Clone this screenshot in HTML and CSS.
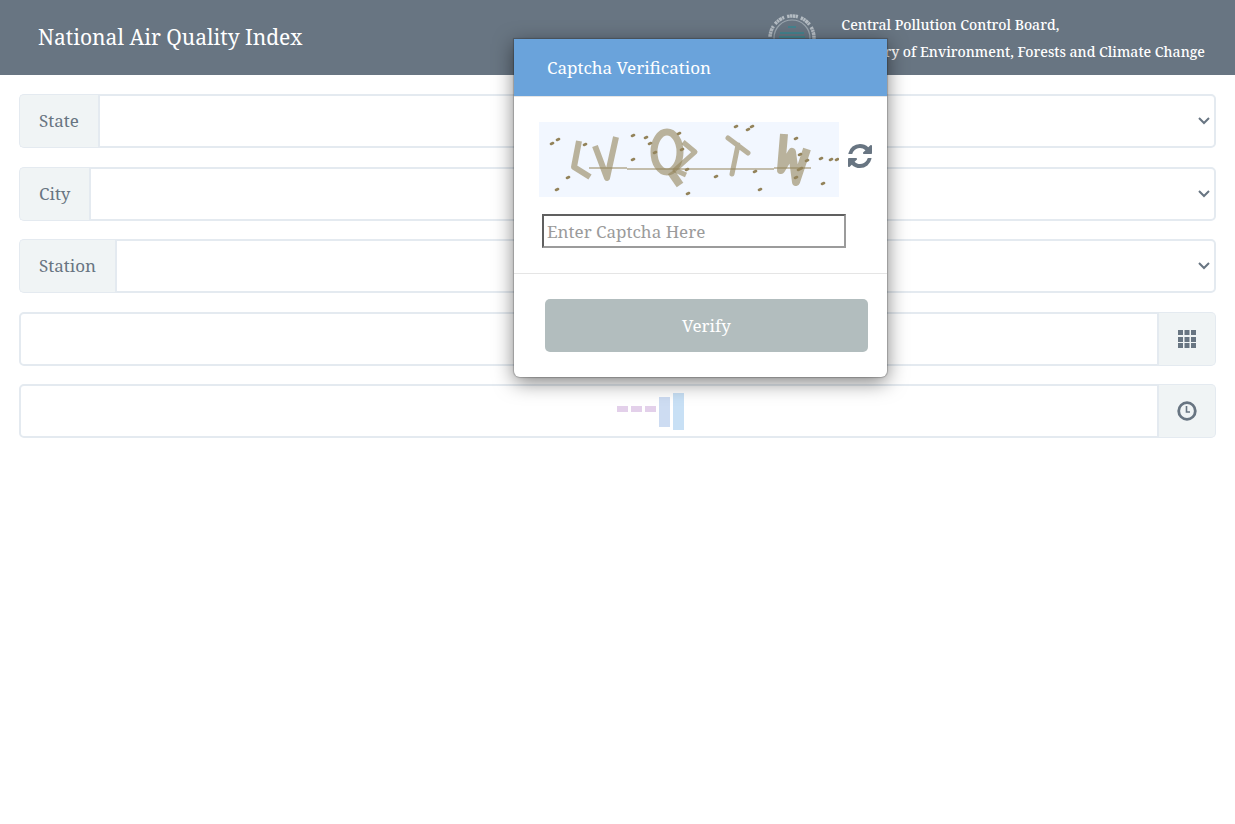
FILE: index.html
```html
<!DOCTYPE html>
<html lang="en">
<head>
<meta charset="utf-8">
<title>National Air Quality Index</title>
<link rel="stylesheet" href="styles.css">
</head>
<body>
<header class="topbar">
  <h1 class="title">National Air Quality Index</h1>
  <div class="board">
    <svg class="logo" viewBox="0 0 50 50" aria-hidden="true">
      <circle cx="25" cy="25" r="22" fill="none" stroke="#b4bcc3" stroke-width="3.500" stroke-dasharray="2.500 .5 2 .5 3 .5 2 3"/>
      <circle cx="25" cy="25" r="18" fill="none" stroke="#9aa5ae" stroke-width="1.200"/>
      <path d="M21 14h8M13 20h24M12 24h26M12 27h26M12 31h26M16 35h18" stroke="#44838e" stroke-width="2"/>
    </svg>
    <p class="board-name">Central Pollution Control Board,<br>Ministry of Environment, Forests and Climate Change</p>
  </div>
</header>

<main class="filters">
  <div class="group">
    <label class="addon" for="state">State</label>
    <select class="control" id="state"><option></option></select>
  </div>
  <div class="group">
    <label class="addon" for="city">City</label>
    <select class="control" id="city"><option></option></select>
  </div>
  <div class="group">
    <label class="addon" for="station">Station</label>
    <select class="control" id="station"><option></option></select>
  </div>
  <div class="group">
    <input class="control" type="text" aria-label="Date">
    <button class="addon addon-icon" type="button" aria-label="Choose date">
      <svg width="18" height="18" viewBox="0 0 18 18" fill="currentColor"><path d="M0 0h5v5H0zM6.500 0h5v5h-5zM13 0h5v5h-5zM0 7h5v5H0zM6.500 7h5v5h-5zM13 7h5v5h-5zM0 13h5v5H0zM6.500 13h5v5h-5zM13 13h5v5h-5z"/></svg>
    </button>
  </div>
  <div class="group">
    <input class="control" type="text" aria-label="Time">
    <button class="addon addon-icon" type="button" aria-label="Choose time">
      <svg width="20" height="20" viewBox="0 0 20 20" fill="none" stroke="currentColor"><circle cx="10" cy="10" r="8.300" stroke-width="2.800"/><path d="M9.500 5v6H13" stroke-width="1.600"/></svg>
    </button>
  </div>
</main>

<div class="loader" aria-hidden="true">
  <span class="bar"></span><span class="bar"></span><span class="bar"></span><span class="bar bar-mid"></span><span class="bar bar-tall"></span>
</div>

<form class="modal" role="dialog" aria-labelledby="modal-title">
  <h2 class="modal-head" id="modal-title">Captcha Verification</h2>
  <div class="modal-body">
    <div class="captcha-row">
      <svg class="captcha" viewBox="0 0 300 75" role="img" aria-label="Captcha image">
        <g fill="none" stroke="#93835a" stroke-opacity=".6" stroke-width="6" stroke-linejoin="round">
          <path d="M40 19 35 45 51 55"/>
          <path d="M56 24 68 56 77 15"/>
          <path d="M189 16 209 31M199 23 193 52" stroke-linecap="round" stroke-width="5"/>
          <path d="M245 12 242 48 253 30 257 60 268 27" stroke-width="8"/>
          <ellipse cx="128" cy="30" rx="13" ry="20" stroke-width="7"/>
          <path d="M132 50 141 63" stroke-width="8"/>
          <path d="M144 20 156 30 136 48 147 53" stroke-width="5"/>
        </g>
        <path d="M50 46H88M88 47H235M235 46H272" stroke="#93835a" stroke-opacity=".5" stroke-width="2"/>
        <path d="M12 22l2-1M18 18l2-1M45 23l2-1M28 56l2-1M17 68l2-1M93 14l2-1M106 16l2-1M110 22l2-1M115 31l2-1M93 38l2-1M139 12l2-1M142 28l2-1M147 48l2-1M148 72l2-1M196 5l2-1M208 8l2-1M212 5l2-1M256 17l2-1M260 33l2-1M267 39l2-1M256 56l2-1M281 37l2-1M291 38l2-1M297 38l2-1M283 62l2-1M215 50l2-1M176 55l2-1M220 68l2-1M259 48l4-2" stroke="#93835a" stroke-width="2.600" stroke-linecap="round"/>
      </svg>
      <button class="refresh" type="button" aria-label="Refresh captcha">
        <svg width="24" height="24" viewBox="0 0 1536 1536" fill="currentColor"><path d="M1511 928q0 5-1 7-64 268-268 434.500t-478 166.500q-146 0-282.500-55t-243.500-157l-129 129q-19 19-45 19t-45-19-19-45v-448q0-26 19-45t45-19h448q26 0 45 19t19 45-19 45l-137 137q71 66 161 102t187 36q134 0 250-65t186-179q11-17 53-117 8-23 30-23h192q13 0 22.500 9.500t9.500 22.500zm25-800v448q0 26-19 45t-45 19h-448q-26 0-45-19t-19-45 19-45l138-138q-148-137-349-137-134 0-250 65t-186 179q-11 17-53 117-8 23-30 23h-199q-13 0-22.500-9.500t-9.500-22.500v-7q65-268 270-434.500t480-166.500q146 0 284 55.500t245 156.500l130-129q19-19 45-19t45 19 19 45z"/></svg>
      </button>
    </div>
    <input class="captcha-input" type="text" placeholder="Enter Captcha Here" aria-label="Enter Captcha Here">
  </div>
  <div class="modal-foot">
    <button class="verify" type="submit">Verify</button>
  </div>
</form>
</body>
</html>
```
FILE: styles.css
```css
* { box-sizing: border-box; }

body {
  margin: 0;
  background: #fff;
  color: #687582;
  font: 17px/29px "Noto Serif", "Droid Serif", Cambria, "Liberation Serif", serif;
}

button, input, select { font: inherit; color: inherit; }

.topbar {
  display: flex;
  justify-content: space-between;
  align-items: center;
  height: 75px;
  padding: 0 30px 0 38px;
  background: #687582;
  color: #fff;
}

.title { margin: 0; font-size: 21px; font-weight: 400; }
.board { display: flex; align-items: center; gap: 24px; }
.logo { width: 50px; height: 50px; }
.board-name { margin: 0; font-size: 14px; font-weight: 500; line-height: 27px; }

.filters {
  display: flex;
  flex-direction: column;
  justify-content: space-between;
  min-height: 382px;
  padding: 19px;
}

.group { display: flex; height: 54px; }

.addon {
  padding: 11px 19px;
  border: 1px solid #e4eaf0;
  border-right: 0;
  border-radius: 5px 0 0 5px;
  background: #f0f4f5;
}

.addon-icon {
  display: flex;
  align-items: center;
  justify-content: center;
  width: 57px;
  padding: 0;
  border: 1px solid #e4eaf0;
  border-left: 0;
  border-radius: 0 5px 5px 0;
}

.control {
  flex: 1;
  min-width: 0;
  padding: 0;
  border: 2px solid #e4eaf0;
  border-radius: 0 5px 5px 0;
  background: #fff;
}

select.control {
  appearance: none;
  background: #fff url("data:image/svg+xml,%3Csvg xmlns='http://www.w3.org/2000/svg' viewBox='0 0 12 8'%3E%3Cpath d='M1 1l5 5 5-5' fill='none' stroke='%23687582' stroke-width='2'/%3E%3C/svg%3E") no-repeat right 4px center / 12px 8px;
}

input.control { border-radius: 5px 0 0 5px; }

.loader {
  position: absolute;
  top: 393px;
  left: 617px;
  display: flex;
  align-items: center;
  gap: 3px;
  height: 37px;
}

.bar { width: 11px; height: 6px; margin-bottom: 5px; background: #e3d0ea; }
.bar-mid { height: 30px; margin-bottom: 0; background: #cddcf2; }
.bar-tall { height: 37px; margin-bottom: 0; background: #c8e0f5; }

.modal {
  position: absolute;
  top: 39px;
  left: 514px;
  width: 373px;
  border-radius: 0 0 6px 6px;
  background: #fff;
  box-shadow: 0 0 1px 1px rgba(0, 0, 0, .2), 0 5px 20px rgba(0, 0, 0, .5);
}

.modal-head {
  margin: 0;
  padding: 14px 33px;
  border-bottom: 1px solid #e5e5e5;
  background: #6aa3db;
  color: #fff;
  font-size: 17px;
  font-weight: 400;
}

.modal-body { padding: 25px 15px 25px 25px; }
.captcha-row { display: flex; justify-content: space-between; }
.captcha { width: 300px; height: 75px; background: #f2f7ff; }
.refresh { display: flex; align-items: center; height: 68px; padding: 0; border: 0; background: none; }

.captcha-input {
  display: block;
  width: 304px;
  height: 34px;
  margin: 17px 3px 0;
  padding: 0 3px;
  border: 2px solid;
  border-color: #606060 #9b9b9b #9b9b9b #606060;
  background: #fff;
}

.captcha-input::placeholder { color: #9b9b9b; }

.modal-foot { padding: 25px 19px 25px 31px; border-top: 1px solid #e5e5e5; }

.verify {
  width: 100%;
  padding: 12px;
  border: 0;
  border-radius: 5px;
  background: #b2bdbe;
  color: #fff;
}
```
